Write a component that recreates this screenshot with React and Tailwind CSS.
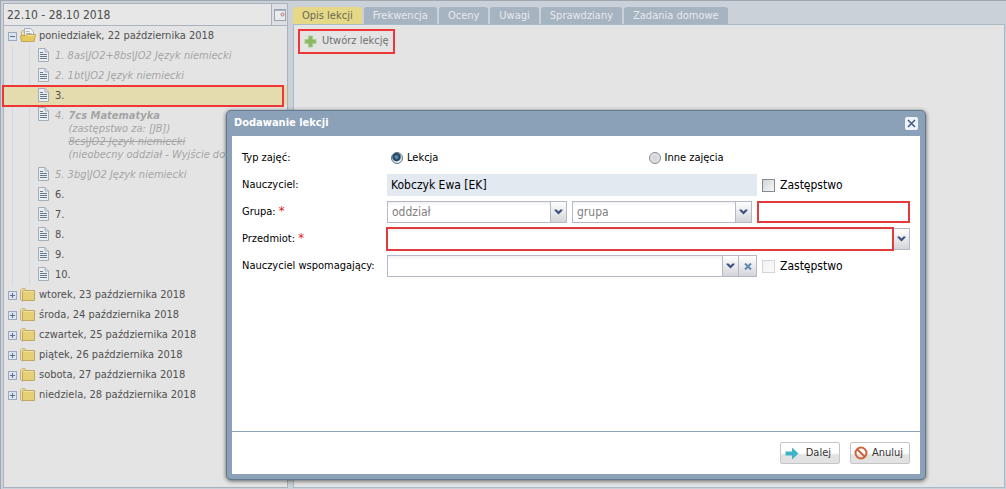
import React, { useState } from 'react';

const tabs = ['Opis lekcji', 'Frekwencja', 'Oceny', 'Uwagi', 'Sprawdziany', 'Zadania domowe'];

const lessons = [
  { no: 1, title: '8as|JO2+8bs|JO2 Język niemiecki' },
  { no: 2, title: '1bt|JO2 Język niemiecki' },
  { no: 3 },
  { no: 4, details: true },
  { no: 5, title: '3bg|JO2 Język niemiecki' },
  { no: 6 },
  { no: 7 },
  { no: 8 },
  { no: 9 },
  { no: 10 },
];

const days = [
  'wtorek, 23 października 2018',
  'środa, 24 października 2018',
  'czwartek, 25 października 2018',
  'piątek, 26 października 2018',
  'sobota, 27 października 2018',
  'niedziela, 28 października 2018',
];

function ToggleIcon({ open }) {
  return (
    <svg width="9" height="9" viewBox="0 0 9 9" shapeRendering="crispEdges" className="shrink-0">
      <rect x="0.5" y="0.5" width="8" height="8" fill="#dde3ea" stroke="#9aa9bf" />
      <path d="M2 4.5H7" stroke="#5b7294" />
      {!open && <path d="M4.5 2V7" stroke="#5b7294" />}
    </svg>
  );
}

function FolderIcon({ open }) {
  return (
    <svg width="16" height="16" viewBox="0 0 16 16" className="shrink-0">
      {open ? (
        <>
          <path d="M1.5 13.5V4L2.5 2.5H5.5L6.5 4H13.5V12" fill="#ecdf9c" stroke="#c4b173" />
          <path d="M4.5 0.5H10.5L13.5 3.5V9H4.5Z" fill="#f1f3f5" stroke="#a3adb8" />
          <path d="M6 3.5H9.5M6 5.5H11.5" stroke="#a7b7c8" />
          <path d="M0.5 8L2 7.5H6L7 6.5H15.5L14 13.5H1.5Z" fill="#e6ca5e" stroke="#bda75c" />
          <path d="M7.5 7.5H14.5" stroke="#f1e3a0" />
        </>
      ) : (
        <>
          <path d="M0.5 12V3L2 1.5H5L6.5 3.5" fill="#ebdfa5" stroke="#c9b57c" />
          <path d="M0.5 12L2 14H3" fill="none" stroke="#bda75c" />
          <path d="M2.5 4.5L3 3.5H14.5V13.5H2.5Z" fill="#e5d078" stroke="#bfa961" />
          <path d="M3.5 4.5H13.5" stroke="#efe1a4" />
        </>
      )}
    </svg>
  );
}

function PageIcon() {
  return (
    <svg width="11" height="14" viewBox="0 0 11 14" className="shrink-0">
      <path d="M0.5 0.5H7L10.5 4V13.5H0.5Z" fill="#ebeef1" stroke="#a3aeb9" />
      <path d="M7 0.5V4H10.5" fill="#d9dde2" stroke="#a3aeb9" />
      <path d="M2 4.5H5M2 6.5H9M2 8.5H9M2 10.5H9" stroke="#66788c" />
    </svg>
  );
}

function CalendarIcon() {
  return (
    <svg width="12" height="12" viewBox="0 0 12 12">
      <rect x="0.5" y="0.5" width="11" height="11" fill="#e9ebee" stroke="#9ba3ae" />
      <path d="M1 1.5H11" stroke="#a9b4c2" />
      <circle cx="8.5" cy="5.5" r="1.5" fill="#f2e5e3" stroke="#b4736d" />
    </svg>
  );
}

function PlusIcon() {
  return (
    <svg width="13" height="13" viewBox="0 0 13 13">
      <path d="M4.5 1H8.5V4.5H12V8.5H8.5V12H4.5V8.5H1V4.5H4.5Z" fill="#8cb964" stroke="#a9cb8b" />
    </svg>
  );
}

function Chevron() {
  return (
    <svg width="9" height="6" viewBox="0 0 9 6">
      <path d="M0.5 0.5H2.5L4.5 2.5L6.5 0.5H8.5V1.5L4.5 5.5L0.5 1.5Z" fill="#3b4f7c" />
    </svg>
  );
}

function Combo({ id, label, placeholder, invalid, clearable }) {
  return (
    <div className={`flex min-w-0 flex-1 items-center ${invalid ? '-my-px -ml-px' : ''}`}>
      <select
        id={id}
        aria-label={label}
        className={`min-w-0 flex-1 appearance-none bg-linear-to-b from-[#f1f1f1] to-white to-20% px-1 text-[12px] text-[#808080] outline-none ${invalid ? 'h-6 border-2 border-[#e03c3c]' : 'h-[22px] border border-[#b5b8c8]'}`}
      >
        <option>{placeholder}</option>
      </select>
      <span className="flex h-[22px] w-4 shrink-0 items-center justify-center border border-l-0 border-[#b5b8c8] bg-linear-to-b from-white to-[#d3d5d9]">
        <Chevron />
      </span>
      {clearable && (
        <button type="button" aria-label="Wyczyść" className="flex h-[22px] w-[18px] shrink-0 items-center justify-center border border-l-0 border-[#b5b8c8] bg-linear-to-b from-white to-[#d3d5d9]">
          <svg width="8" height="7" viewBox="0 0 8 7"><path d="M1 0.5L7 6.5M7 0.5L1 6.5" stroke="#5e88b4" strokeWidth="2" /></svg>
        </button>
      )}
    </div>
  );
}

function Radio({ label, checked, onChange }) {
  return (
    <label className="flex items-center gap-1">
      <input
        type="radio"
        name="typ"
        checked={checked}
        onChange={onChange}
        className="size-3 appearance-none rounded-full border border-[#7f8895] bg-[radial-gradient(circle,#d8d8d8_30%,#f0f0f0)] checked:border-[#5d7183] checked:bg-[radial-gradient(circle_at_45%_40%,#7ba3c4_0,#1f4263_38%,#1f4263_45%,#e9eef2_60%)]"
      />
      {label}
    </label>
  );
}

function Substitute({ disabled }) {
  return (
    <label className="flex w-[148px] items-center gap-[5px] text-[12px]">
      <input
        type="checkbox"
        disabled={disabled}
        className="size-[13px] appearance-none border border-[#858a90] bg-linear-to-br from-[#d0d2d4] to-[#fafafa] disabled:border-[#d5d5d5] disabled:from-[#f2f2f2]"
      />
      Zastępstwo
    </label>
  );
}

function FormRow({ label, htmlFor, required, children }) {
  return (
    <div className="flex h-[22px] items-center">
      <label htmlFor={htmlFor} className="w-[145px] shrink-0">
        {label}: {required && <span className="text-[13px] leading-none text-[#e02020]">*</span>}
      </label>
      <div className="flex min-w-0 flex-1 items-center gap-[5px]">{children}</div>
    </div>
  );
}

function LessonItem({ lesson, selected, onSelect }) {
  const planned = lesson.title || lesson.details;
  return (
    <li className={selected ? 'h-5 bg-[#e4dcae]' : ''}>
      <button
        type="button"
        onClick={onSelect}
        className={`flex items-start text-left whitespace-nowrap ${selected ? '-my-px -ml-0.5 h-[22px] w-[282px] border-2 border-[#ef3535] pl-[34px]' : 'w-full pl-[34px]'} ${planned ? 'text-[#a5a5a5] italic' : 'text-[#505050]'}`}
      >
        <span className={selected ? 'pt-px' : 'pt-0.5'}><PageIcon /></span>
        {lesson.details ? (
          <span className="flex gap-1 pt-1 pb-1 pl-1.5 leading-[13px]">
            <span>{lesson.no}.</span>
            <span>
              <b className="block">7cs Matematyka</b>
              <span className="block">(zastępstwo za: [JB])</span>
              <s className="block">8cs|JO2 Język niemiecki</s>
              <span className="block">(nieobecny oddział - Wyjście do</span>
            </span>
          </span>
        ) : (
          <span className={`pl-1.5 ${selected ? 'leading-[18px]' : 'leading-5'}`}>{lesson.no}. {lesson.title}</span>
        )}
      </button>
    </li>
  );
}

function LessonTree() {
  const [selected, setSelected] = useState(3);

  return (
    <aside className="flex w-[285px] shrink-0 flex-col border border-[#aab3bd] bg-[#e4e4e4]">
      <div className="flex h-[22px] shrink-0 border-b border-[#aab3bd] bg-[#e7e7e7]">
        <input aria-label="Tydzień" defaultValue="22.10 - 28.10 2018" className="min-w-0 flex-1 px-[3px] text-[12px] text-[#4c4c4c] outline-none" />
        <button type="button" aria-label="Wybierz tydzień" className="flex w-4 items-center justify-center border-l border-[#aab3bd] bg-[#dcdfe3]">
          <CalendarIcon />
        </button>
      </div>
      <ul className="text-[#505050]">
        <li>
          <button type="button" className="flex h-5 w-full items-center gap-[3px] pl-1 whitespace-nowrap">
            <ToggleIcon open />
            <FolderIcon open />
            poniedziałek, 22 października 2018
          </button>
          <ul className="bg-[linear-gradient(#d6d9dc,#d6d9dc),linear-gradient(#d6d9dc,#d6d9dc)] bg-[size:1px_100%] bg-[position:8px_0,25px_0] bg-no-repeat">
            {lessons.map(l => (
              <LessonItem key={l.no} lesson={l} selected={l.no === selected} onSelect={() => setSelected(l.no)} />
            ))}
          </ul>
        </li>
        {days.map(day => (
          <li key={day}>
            <button type="button" className="flex h-5 w-full items-center gap-[3px] pl-1 whitespace-nowrap">
              <ToggleIcon />
              <FolderIcon />
              {day}
            </button>
          </li>
        ))}
      </ul>
    </aside>
  );
}

function LessonPanel() {
  return (
    <section className="flex min-w-0 flex-1 flex-col">
      <nav className="flex h-[21px] shrink-0 items-end gap-0.5 pt-1">
        {tabs.map((tab, i) => (
          <button
            key={tab}
            type="button"
            className={`h-[17px] rounded-t-[3px] px-[9px] leading-4 whitespace-nowrap ${i === 0 ? 'bg-[#e5d987] text-[#6b6855]' : 'bg-[#a6b3c0] text-[#e6eaee]'}`}
          >
            {tab}
          </button>
        ))}
      </nav>
      <div className="flex-1 border border-[#a9bac9] bg-[#e4e4e4] p-1">
        <button type="button" className="flex h-[25px] items-center gap-[5px] border-2 border-[#ef3535] px-1 text-[11px] text-[#707070]">
          <PlusIcon />
          Utwórz lekcję
        </button>
      </div>
    </section>
  );
}

function AddLessonDialog() {
  const [type, setType] = useState('lekcja');

  return (
    <div role="dialog" aria-label="Dodawanie lekcji" className="absolute top-[109px] left-[225px] flex w-[700px] flex-col rounded-[5px] border border-[#64798d] bg-[#8aa1b8] px-[5px] pb-[5px] shadow-[0_1px_4px_rgba(0,0,0,0.6)]">
      <header className="flex h-[25px] items-center justify-between px-0.5">
        <h1 className="font-bold text-white">Dodawanie lekcji</h1>
        <button type="button" aria-label="Zamknij" className="flex size-[13px] items-center justify-center rounded-[2px] bg-[#eef2fa]">
          <svg width="9" height="9" viewBox="0 0 9 9"><path d="M1 1L8 8M8 1L1 8" stroke="#41598c" strokeWidth="1.5" /></svg>
        </button>
      </header>
      <form className="flex flex-col bg-white text-black">
        <div className="flex h-[295px] flex-col gap-[5px] px-2.5 pt-[11px]">
          <FormRow label="Typ zajęć">
            <div className="grid flex-1 grid-cols-2 pr-1 pl-1">
              <Radio label="Lekcja" checked={type === 'lekcja'} onChange={() => setType('lekcja')} />
              <Radio label="Inne zajęcia" checked={type === 'inne'} onChange={() => setType('inne')} />
            </div>
          </FormRow>
          <FormRow label="Nauczyciel" htmlFor="nauczyciel">
            <input id="nauczyciel" readOnly value="Kobczyk Ewa [EK]" className="h-[22px] min-w-0 flex-1 bg-[#e2e9f1] px-1 text-[12px] outline-none" />
            <Substitute />
          </FormRow>
          <FormRow label="Grupa" htmlFor="oddzial" required>
            <Combo id="oddzial" placeholder="oddział" />
            <Combo label="Grupa" placeholder="grupa" />
            <input aria-label="Nazwa grupy" className="h-[22px] w-[153px] border-2 border-[#e03c3c] px-1 text-[12px] outline-none" />
          </FormRow>
          <FormRow label="Przedmiot" htmlFor="przedmiot" required>
            <Combo id="przedmiot" invalid />
          </FormRow>
          <FormRow label="Nauczyciel wspomagający" htmlFor="wspomagajacy">
            <Combo id="wspomagajacy" clearable />
            <Substitute disabled />
          </FormRow>
        </div>
        <footer className="flex h-[43px] items-center justify-end gap-2.5 border-t border-[#8aa1b8] px-2.5">
          <button type="button" className="flex h-[22px] w-[60px] items-center justify-between rounded-[2px] border border-[#c3c5c9] bg-linear-to-b from-white from-50% to-[#e2e2e2] to-60% pr-2 pl-1 text-[#333]">
            <svg width="14" height="13" viewBox="0 0 14 13"><path d="M0.5 4.5H7V0.5L13.5 6.5L7 12.5V8.5H0.5Z" fill="#3fb4c8" /></svg>
            Dalej
          </button>
          <button type="button" className="flex h-[22px] w-[60px] items-center justify-between rounded-[2px] border border-[#c3c5c9] bg-linear-to-b from-white from-50% to-[#e2e2e2] to-60% pr-1.5 pl-[3px] text-[#333]">
            <svg width="14" height="14" viewBox="0 0 14 14" fill="none" stroke="#cf6338" strokeWidth="2"><circle cx="7" cy="7" r="5.5" /><path d="M3 3L11 11" /></svg>
            Anuluj
          </button>
        </footer>
      </form>
    </div>
  );
}

export default function App() {
  return (
    <div className="relative flex h-screen gap-[5px] overflow-hidden border-t border-l border-[#a0a7af] bg-[#cbd1d9] pt-0.5 pr-px pb-px pl-0.5 font-['DejaVu_Sans_Condensed','Noto_Sans',sans-serif] text-[11px]">
      <LessonTree />
      <LessonPanel />
      <AddLessonDialog />
    </div>
  );
}
